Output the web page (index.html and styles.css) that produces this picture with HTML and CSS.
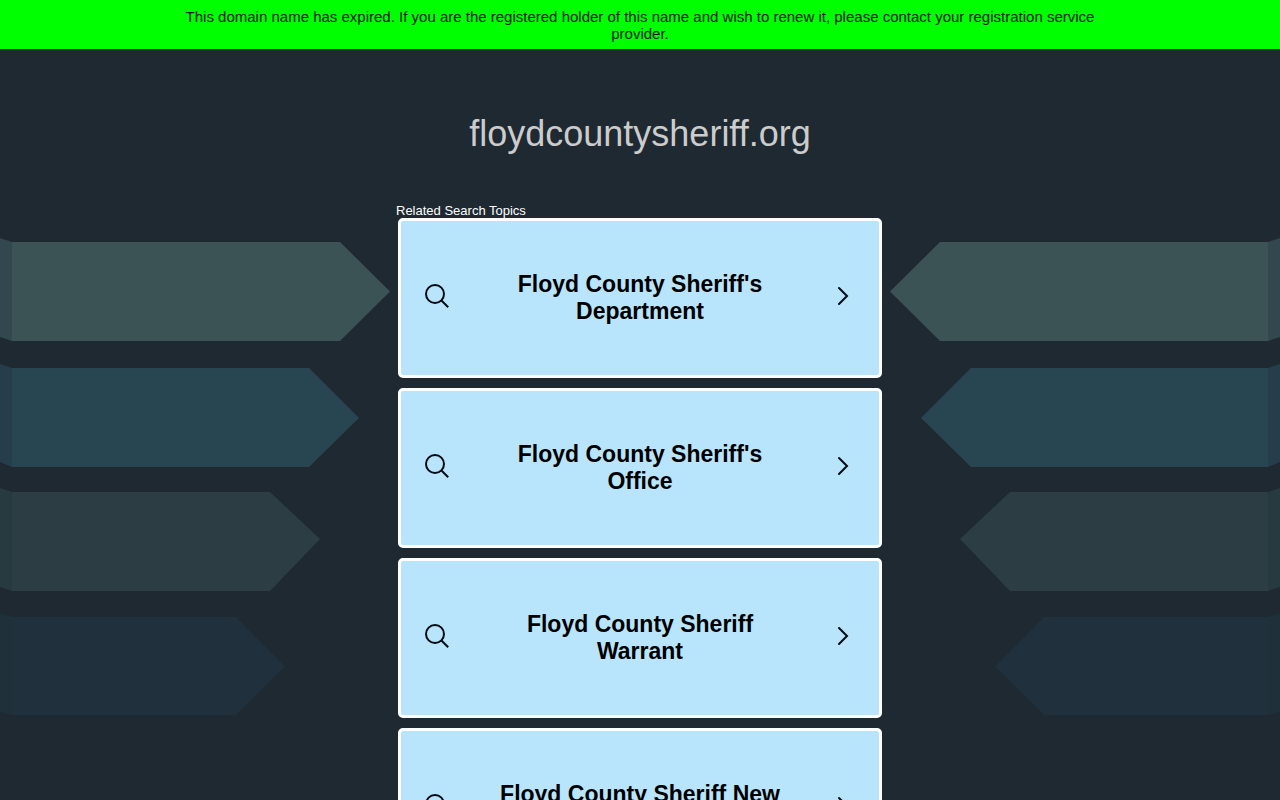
FILE: index.html
```html
<!DOCTYPE html>
<html lang="en">
<head>
<meta charset="utf-8">
<meta name="viewport" content="width=device-width, initial-scale=1">
<title>floydcountysheriff.org</title>
<link rel="stylesheet" href="styles.css">
</head>
<body>
<svg class="symbols" aria-hidden="true">
  <symbol id="search" viewBox="0 0 28 28">
    <g fill="none" stroke="#000a12" stroke-width="2">
      <circle cx="12" cy="10" r="9"/>
      <path d="M18.200 16.200 25.200 23.200"/>
    </g>
  </symbol>
  <symbol id="chevron" viewBox="0 0 28 28">
    <path d="M10 4 18 12 10 20" fill="none" stroke="#000a12" stroke-width="2" stroke-linecap="round"/>
  </symbol>
  <symbol id="arrows" viewBox="0 0 400 500">
    <path fill="#32474e" d="M0 13 12 17V116L0 112z"/>
    <path fill="#3c5356" d="M12 17H340L390 66.500 340 116H12z"/>
    <path fill="#39504f" d="M340 17h1v99h-1z" opacity=".4"/>
    <path fill="#263e4b" d="M0 139 12 143V242L0 237z"/>
    <path fill="#284552" d="M12 143H309L359 193 309 242H12z"/>
    <path fill="#263a3f" d="M0 263 12 267V366L0 362z"/>
    <path fill="#2c3e43" d="M12 267H270L320 314 270 366H12z"/>
    <path fill="#1f303b" d="M0 388 12 392V490L0 487z"/>
    <path fill="#20303c" d="M12 392H236L285 441.500 236 490H12z"/>
  </symbol>
</svg>

<header class="notice">
  <p class="notice-text">This domain name has expired. If you are the registered holder of this name and wish to renew it, please contact your registration service provider.</p>
</header>

<div class="page">
  <svg class="arrows" aria-hidden="true"><use href="#arrows"/></svg>
  <svg class="arrows arrows-right" aria-hidden="true"><use href="#arrows"/></svg>
  <h1 class="domain">floydcountysheriff.org</h1>
  <main class="topics">
    <h2 class="topics-label">Related Search Topics</h2>
    <nav class="topic-list" aria-label="Related Search Topics">
      <a class="topic" href="#">
        <svg class="icon" aria-hidden="true"><use href="#search"/></svg>
        <span class="topic-title">Floyd County Sheriff's Department</span>
        <svg class="icon" aria-hidden="true"><use href="#chevron"/></svg>
      </a>
      <a class="topic" href="#">
        <svg class="icon" aria-hidden="true"><use href="#search"/></svg>
        <span class="topic-title">Floyd County Sheriff's Office</span>
        <svg class="icon" aria-hidden="true"><use href="#chevron"/></svg>
      </a>
      <a class="topic" href="#">
        <svg class="icon" aria-hidden="true"><use href="#search"/></svg>
        <span class="topic-title">Floyd County Sheriff Warrant</span>
        <svg class="icon" aria-hidden="true"><use href="#chevron"/></svg>
      </a>
      <a class="topic" href="#">
        <svg class="icon" aria-hidden="true"><use href="#search"/></svg>
        <span class="topic-title">Floyd County Sheriff New</span>
        <svg class="icon" aria-hidden="true"><use href="#chevron"/></svg>
      </a>
    </nav>
  </main>
</div>
</body>
</html>
```
FILE: styles.css
```css
* {
  box-sizing: border-box;
}

body {
  margin: 0;
  background: #1e2932;
  font-family: "Liberation Sans", Arial, sans-serif;
}

.symbols {
  display: none;
}

.notice {
  padding: 8px 16px 7px;
  background: #00ff00;
}

.notice-text {
  max-width: 960px;
  margin: 0 auto;
  color: #001a00;
  font-size: 15px;
  line-height: 17px;
  text-align: center;
}

.page {
  position: relative;
  padding: 64px 0 32px;
  overflow: hidden;
}

/* Decorative ribbons behind the content, mirrored on the right edge */
.arrows {
  position: absolute;
  top: 176px;
  left: 0;
  width: 400px;
  height: 500px;
}

.arrows-right {
  right: 0;
  left: auto;
  transform: scaleX(-1);
}

.domain {
  position: relative;
  margin: 0;
  color: #cccccc;
  font-size: 36px;
  font-weight: 400;
  line-height: 42px;
  text-align: center;
}

.topics {
  position: relative;
  max-width: 488px;
  margin: 48px auto 0;
}

.topics-label {
  margin: 0;
  color: #ffffff;
  font-size: 13px;
  font-weight: 400;
  line-height: 15px;
}

.topic-list {
  display: flex;
  flex-direction: column;
  gap: 10px;
  padding: 0 2px;
}

.topic {
  display: flex;
  align-items: center;
  justify-content: space-between;
  padding: 50px 22px;
  border: 3px solid #ffffff;
  border-radius: 5px;
  background: #b8e5fc;
  color: #000000;
  text-decoration: none;
}

.topic-title {
  width: 300px;
  min-height: 54px;
  font-size: 23px;
  font-weight: 700;
  line-height: 27px;
  text-align: center;
}

.icon {
  flex: none;
  width: 28px;
  height: 28px;
}
```
